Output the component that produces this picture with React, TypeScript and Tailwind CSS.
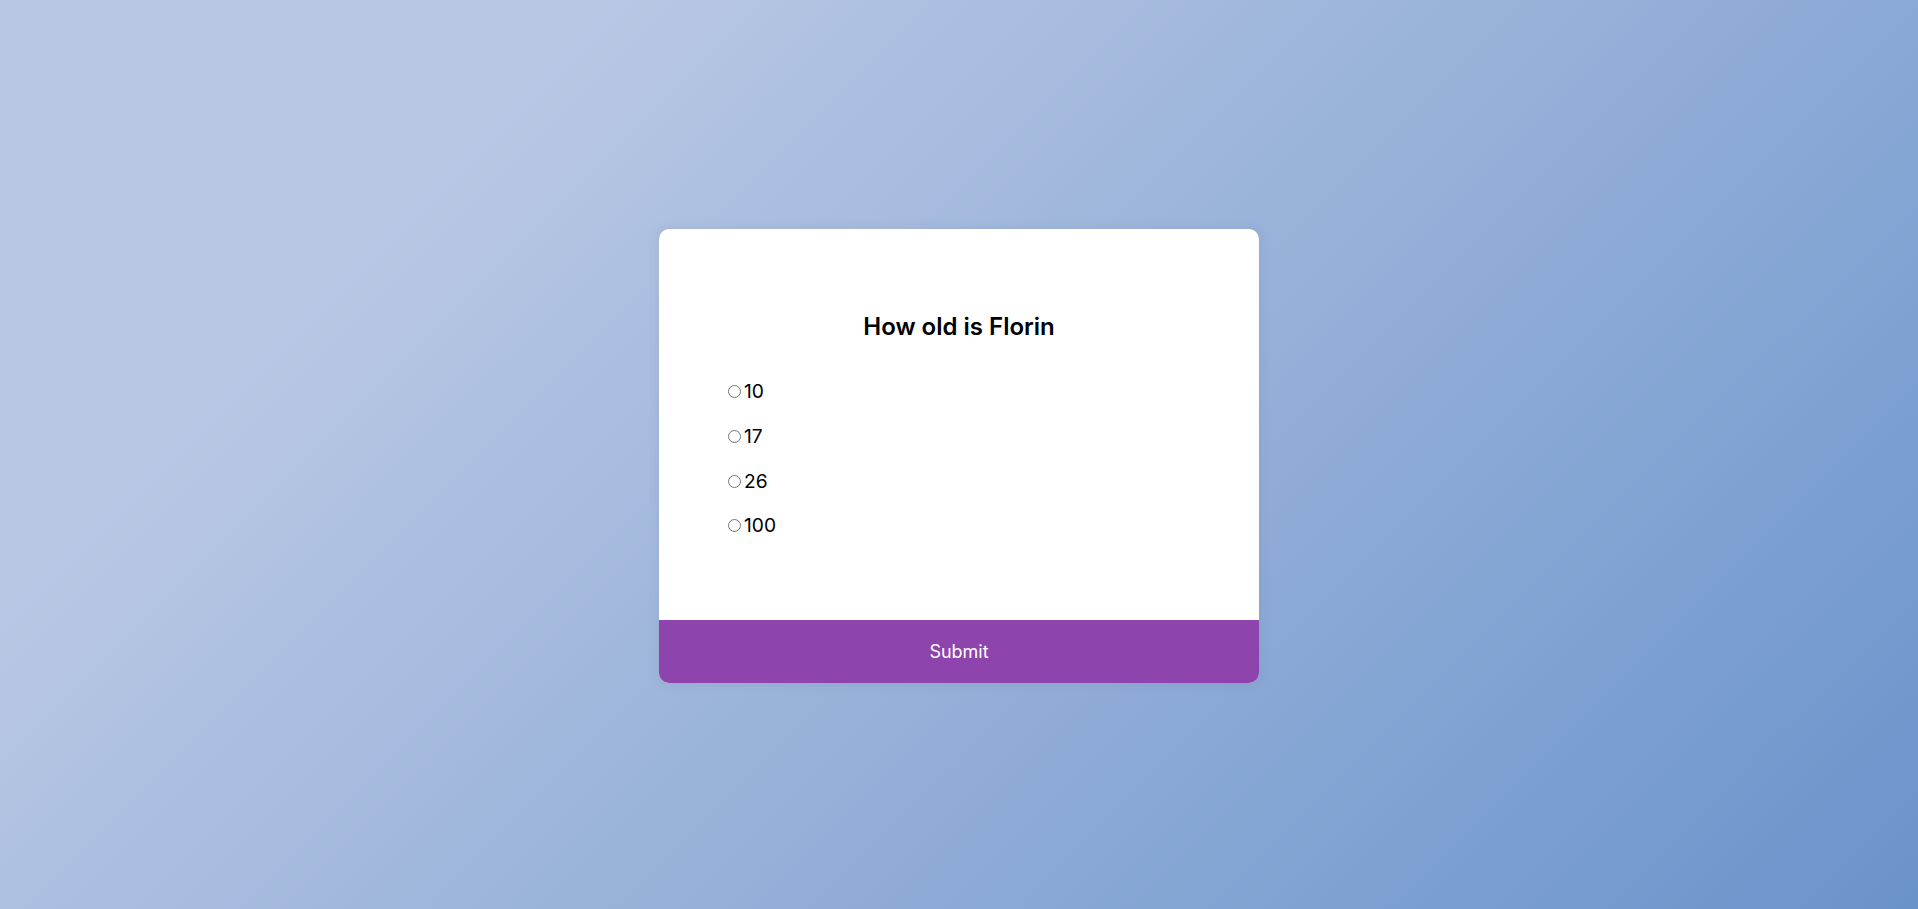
import { useState } from "react";

export default function App() {
  const answers = ["10", "17", "26", "100"];
  const [picked, setPicked] = useState<string | null>(null);

  return (
    <main
      className="h-screen overflow-hidden flex items-center justify-center bg-[#6a93cb] bg-[linear-gradient(315deg,#6a93cb_0%,#b8c7e4_78%)]"
      style={{ fontFamily: "Inter, 'Liberation Sans', sans-serif" }}
    >
      <div className="mt-[3px] w-[600px] bg-white rounded-[10px] overflow-hidden shadow-[0_0_10px_2px_rgba(100,100,100,0.1)]">
        {/* Question */}
        <div className="p-16">
          <h2 className="p-4 text-center text-[24px] leading-[36px] font-semibold text-black">
            How old is Florin
          </h2>
          <ul className="my-4">
            {answers.map((a) => (
              <li key={a} className="my-4 text-[19.2px] leading-[28.8px] text-black">
                <input
                  type="radio"
                  name="answer"
                  id={"a" + a}
                  checked={picked === a}
                  onChange={() => setPicked(a)}
                  className="ml-[5px] mr-[3px] mt-[3px]"
                />
                <label htmlFor={"a" + a} className="cursor-pointer">
                  {a}
                </label>
              </li>
            ))}
          </ul>
        </div>

        {/* Submit */}
        <button className="block w-full h-[63px] bg-[#8e44ad] text-white text-[18px] cursor-pointer">
          Submit
        </button>
      </div>
    </main>
  );
}
